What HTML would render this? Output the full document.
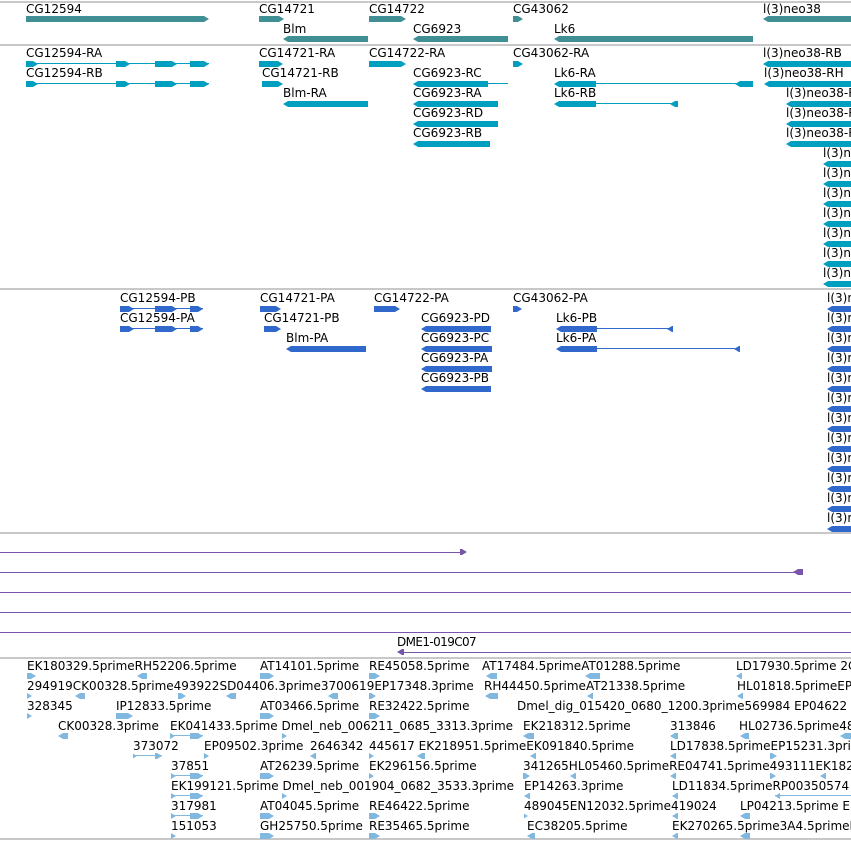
<!DOCTYPE html>
<html><head><meta charset="utf-8">
<style>
html,body{margin:0;padding:0;background:#fff;width:851px;height:841px;overflow:hidden;position:relative}
.t{position:absolute;font:12px "DejaVu Sans","Liberation Sans",sans-serif;line-height:14px;white-space:nowrap;color:#000}
.b{position:absolute;height:6px}
.ln{position:absolute;height:1px}
.sep{position:absolute;left:0;width:851px;height:2px;background:#c8c8c8}
.g{background:#3f8f94}.x{background:#009fc0}.p{background:#3068cc}.e{background:#80b8e0}.v{background:#7755aa}
.r{clip-path:polygon(0 0,calc(100% - 5px) 0,100% 50%,calc(100% - 5px) 100%,0 100%)}
.l{clip-path:polygon(5px 0,100% 0,100% 100%,5px 100%,0 50%)}
</style></head><body>
<div class="sep" style="top:1px"></div>
<div class="sep" style="top:44px"></div>
<div class="sep" style="top:288px"></div>
<div class="sep" style="top:532px"></div>
<div class="sep" style="top:657px"></div>
<div class="sep" style="top:838px"></div>

<!-- genes -->
<div class="t" style="left:26px;top:2px">CG12594</div><div class="b g r" style="left:26px;top:16px;width:183px"></div>
<div class="t" style="left:259px;top:2px">CG14721</div><div class="b g r" style="left:259px;top:16px;width:25px"></div>
<div class="t" style="left:369px;top:2px">CG14722</div><div class="b g r" style="left:369px;top:16px;width:37px"></div>
<div class="t" style="left:513px;top:2px">CG43062</div><div class="b g r" style="left:513px;top:16px;width:10px"></div>
<div class="t" style="left:763px;top:2px">l(3)neo38</div><div class="b g l" style="left:763px;top:16px;width:88px"></div>
<div class="t" style="left:283px;top:22px">Blm</div><div class="b g l" style="left:283px;top:36px;width:85px"></div>
<div class="t" style="left:413px;top:22px">CG6923</div><div class="b g l" style="left:413px;top:36px;width:95px"></div>
<div class="t" style="left:554px;top:22px">Lk6</div><div class="b g l" style="left:554px;top:36px;width:199px"></div>

<!-- transcripts -->
<div class="t" style="left:26px;top:46px">CG12594-RA</div>
<div class="ln x" style="left:26px;top:63px;width:183px"></div>
<div class="b x r" style="left:26px;top:61px;width:12px"></div><div class="b x r" style="left:116px;top:61px;width:14px"></div><div class="b x r" style="left:155px;top:61px;width:22px"></div><div class="b x r" style="left:190px;top:61px;width:19px"></div>
<div class="t" style="left:26px;top:66px">CG12594-RB</div>
<div class="ln x" style="left:26px;top:83px;width:183px"></div>
<div class="b x r" style="left:26px;top:81px;width:12px"></div><div class="b x r" style="left:116px;top:81px;width:14px"></div><div class="b x r" style="left:155px;top:81px;width:22px"></div><div class="b x r" style="left:190px;top:81px;width:19px"></div>
<div class="t" style="left:259px;top:46px">CG14721-RA</div><div class="b x r" style="left:259px;top:61px;width:24px"></div>
<div class="t" style="left:262px;top:66px">CG14721-RB</div><div class="b x r" style="left:262px;top:81px;width:21px"></div>
<div class="t" style="left:283px;top:86px">Blm-RA</div><div class="b x l" style="left:283px;top:101px;width:85px"></div>
<div class="t" style="left:369px;top:46px">CG14722-RA</div><div class="b x r" style="left:369px;top:61px;width:37px"></div>
<div class="t" style="left:513px;top:46px">CG43062-RA</div><div class="b x r" style="left:513px;top:61px;width:10px"></div>
<div class="t" style="left:413px;top:66px">CG6923-RC</div><div class="b x l" style="left:413px;top:81px;width:75px"></div><div class="ln x" style="left:488px;top:83px;width:20px"></div>
<div class="t" style="left:413px;top:86px">CG6923-RA</div><div class="b x l" style="left:413px;top:101px;width:85px"></div>
<div class="t" style="left:413px;top:106px">CG6923-RD</div><div class="b x l" style="left:413px;top:121px;width:85px"></div>
<div class="t" style="left:413px;top:126px">CG6923-RB</div><div class="b x l" style="left:413px;top:141px;width:77px"></div>
<div class="t" style="left:554px;top:66px">Lk6-RA</div><div class="b x l" style="left:554px;top:81px;width:42px"></div><div class="ln x" style="left:596px;top:83px;width:140px"></div><div class="b x l" style="left:735px;top:81px;width:18px"></div>
<div class="t" style="left:554px;top:86px">Lk6-RB</div><div class="b x l" style="left:554px;top:101px;width:42px"></div><div class="ln x" style="left:596px;top:103px;width:76px"></div><div class="b x l" style="left:670px;top:101px;width:8px"></div>
<div class="t" style="left:763px;top:46px">l(3)neo38-RB</div><div class="b x l" style="left:763px;top:61px;width:88px"></div>
<div class="t" style="left:764px;top:66px">l(3)neo38-RH</div><div class="b x l" style="left:764px;top:81px;width:87px"></div>
<div class="t" style="left:786px;top:86px">l(3)neo38-R</div><div class="b x l" style="left:786px;top:101px;width:65px"></div>
<div class="t" style="left:786px;top:106px">l(3)neo38-R</div><div class="b x l" style="left:786px;top:121px;width:65px"></div>
<div class="t" style="left:786px;top:126px">l(3)neo38-R</div><div class="b x l" style="left:786px;top:141px;width:65px"></div>
<div class="t" style="left:823px;top:146px">l(3)neo</div><div class="b x l" style="left:823px;top:161px;width:28px"></div>
<div class="t" style="left:823px;top:166px">l(3)neo</div><div class="b x l" style="left:823px;top:181px;width:28px"></div>
<div class="t" style="left:823px;top:186px">l(3)neo</div><div class="b x l" style="left:823px;top:201px;width:28px"></div>
<div class="t" style="left:823px;top:206px">l(3)neo</div><div class="b x l" style="left:823px;top:221px;width:28px"></div>
<div class="t" style="left:823px;top:226px">l(3)neo</div><div class="b x l" style="left:823px;top:241px;width:28px"></div>
<div class="t" style="left:823px;top:246px">l(3)neo</div><div class="b x l" style="left:823px;top:261px;width:28px"></div>
<div class="t" style="left:823px;top:266px">l(3)neo</div><div class="b x l" style="left:823px;top:281px;width:28px"></div>

<!-- proteins -->
<div class="t" style="left:120px;top:291px">CG12594-PB</div>
<div class="ln p" style="left:120px;top:308px;width:83px"></div>
<div class="b p r" style="left:120px;top:306px;width:14px"></div><div class="b p r" style="left:155px;top:306px;width:22px"></div><div class="b p r" style="left:190px;top:306px;width:13px"></div>
<div class="t" style="left:120px;top:311px">CG12594-PA</div>
<div class="ln p" style="left:120px;top:328px;width:83px"></div>
<div class="b p r" style="left:120px;top:326px;width:14px"></div><div class="b p r" style="left:155px;top:326px;width:22px"></div><div class="b p r" style="left:190px;top:326px;width:13px"></div>
<div class="t" style="left:260px;top:291px">CG14721-PA</div><div class="b p r" style="left:260px;top:306px;width:21px"></div>
<div class="t" style="left:264px;top:311px">CG14721-PB</div><div class="b p r" style="left:264px;top:326px;width:17px"></div>
<div class="t" style="left:286px;top:331px">Blm-PA</div><div class="b p l" style="left:286px;top:346px;width:80px"></div>
<div class="t" style="left:374px;top:291px">CG14722-PA</div><div class="b p r" style="left:374px;top:306px;width:26px"></div>
<div class="t" style="left:513px;top:291px">CG43062-PA</div><div class="b p r" style="left:513px;top:306px;width:9px"></div>
<div class="t" style="left:421px;top:311px">CG6923-PD</div><div class="b p l" style="left:421px;top:326px;width:70px"></div>
<div class="t" style="left:421px;top:331px">CG6923-PC</div><div class="b p l" style="left:421px;top:346px;width:71px"></div>
<div class="t" style="left:421px;top:351px">CG6923-PA</div><div class="b p l" style="left:421px;top:366px;width:71px"></div>
<div class="t" style="left:421px;top:371px">CG6923-PB</div><div class="b p l" style="left:421px;top:386px;width:70px"></div>
<div class="t" style="left:556px;top:311px">Lk6-PB</div><div class="b p l" style="left:556px;top:326px;width:41px"></div><div class="ln p" style="left:597px;top:328px;width:72px"></div><div class="b p l" style="left:667px;top:326px;width:6px"></div>
<div class="t" style="left:556px;top:331px">Lk6-PA</div><div class="b p l" style="left:556px;top:346px;width:41px"></div><div class="ln p" style="left:597px;top:348px;width:138px"></div><div class="b p l" style="left:734px;top:346px;width:6px"></div>
<div class="t" style="left:827px;top:291px">l(3)n</div><div class="b p l" style="left:827px;top:306px;width:24px"></div>
<div class="t" style="left:827px;top:311px">l(3)n</div><div class="b p l" style="left:827px;top:326px;width:24px"></div>
<div class="t" style="left:827px;top:331px">l(3)n</div><div class="b p l" style="left:827px;top:346px;width:24px"></div>
<div class="t" style="left:827px;top:351px">l(3)n</div><div class="b p l" style="left:827px;top:366px;width:24px"></div>
<div class="t" style="left:827px;top:371px">l(3)n</div><div class="b p l" style="left:827px;top:386px;width:24px"></div>
<div class="t" style="left:827px;top:391px">l(3)n</div><div class="b p l" style="left:827px;top:406px;width:24px"></div>
<div class="t" style="left:827px;top:411px">l(3)n</div><div class="b p l" style="left:827px;top:426px;width:24px"></div>
<div class="t" style="left:827px;top:431px">l(3)n</div><div class="b p l" style="left:827px;top:446px;width:24px"></div>
<div class="t" style="left:827px;top:451px">l(3)n</div><div class="b p l" style="left:827px;top:466px;width:24px"></div>
<div class="t" style="left:827px;top:471px">l(3)n</div><div class="b p l" style="left:827px;top:486px;width:24px"></div>
<div class="t" style="left:827px;top:491px">l(3)n</div><div class="b p l" style="left:827px;top:506px;width:24px"></div>
<div class="t" style="left:827px;top:511px">l(3)n</div><div class="b p l" style="left:827px;top:526px;width:24px"></div>

<!-- purple -->
<div class="ln v" style="left:0;top:552px;width:463px"></div><div class="b v r" style="left:460px;top:549px;width:7px"></div>
<div class="ln v" style="left:0;top:572px;width:795px"></div><div class="b v l" style="left:793px;top:569px;width:10px"></div>
<div class="ln v" style="left:0;top:592px;width:851px"></div>
<div class="ln v" style="left:0;top:612px;width:851px"></div>
<div class="ln v" style="left:0;top:632px;width:851px"></div>
<div class="t" style="left:397px;top:635px;letter-spacing:-0.6px">DME1-019C07</div>
<div class="ln v" style="left:400px;top:652px;width:451px"></div><div class="b v l" style="left:397px;top:649px;width:7px"></div>

<!-- ESTs -->
<div class="t" style="left:27px;top:659px">EK180329.5primeRH52206.5prime</div>
<div class="t" style="left:260px;top:659px">AT14101.5prime</div>
<div class="t" style="left:369px;top:659px">RE45058.5prime</div>
<div class="t" style="left:482px;top:659px">AT17484.5primeAT01288.5prime</div>
<div class="t" style="left:736px;top:659px">LD17930.5prime 2C</div>
<div class="b e r" style="left:27px;top:673px;width:9px"></div><div class="b e l" style="left:137px;top:673px;width:10px"></div><div class="b e r" style="left:260px;top:673px;width:14px"></div><div class="b e r" style="left:369px;top:673px;width:11px"></div><div class="b e l" style="left:486px;top:673px;width:11px"></div><div class="b e l" style="left:585px;top:673px;width:15px"></div><div class="b e l" style="left:736px;top:673px;width:6px"></div>

<div class="t" style="left:27px;top:679px">294919CK00328.5prime493922SD04406.3prime3700619EP17348.3prime</div>
<div class="t" style="left:484px;top:679px">RH44450.5primeAT21338.5prime</div>
<div class="t" style="left:737px;top:679px">HL01818.5primeEP</div>
<div class="b e r" style="left:27px;top:693px;width:5px"></div><div class="b e l" style="left:75px;top:693px;width:10px"></div><div class="b e r" style="left:178px;top:693px;width:8px"></div><div class="b e l" style="left:226px;top:693px;width:10px"></div><div class="b e l" style="left:328px;top:693px;width:10px"></div><div class="b e r" style="left:369px;top:693px;width:7px"></div><div class="b e l" style="left:485px;top:693px;width:13px"></div><div class="b e l" style="left:587px;top:693px;width:6px"></div><div class="b e l" style="left:737px;top:693px;width:6px"></div>

<div class="t" style="left:27px;top:699px">328345</div>
<div class="t" style="left:116px;top:699px">IP12833.5prime</div>
<div class="t" style="left:260px;top:699px">AT03466.5prime</div>
<div class="t" style="left:369px;top:699px">RE32422.5prime</div>
<div class="t" style="left:517px;top:699px">Dmel_dig_015420_0680_1200.3prime569984 EP04622</div>
<div class="b e r" style="left:27px;top:713px;width:5px"></div><div class="b e r" style="left:116px;top:713px;width:17px"></div><div class="b e r" style="left:260px;top:713px;width:14px"></div><div class="b e r" style="left:369px;top:713px;width:11px"></div>

<div class="t" style="left:58px;top:719px">CK00328.3prime</div>
<div class="t" style="left:170px;top:719px">EK041433.5prime Dmel_neb_006211_0685_3313.3prime</div>
<div class="t" style="left:523px;top:719px">EK218312.5prime</div>
<div class="t" style="left:670px;top:719px">313846</div>
<div class="t" style="left:739px;top:719px">HL02736.5prime48</div>
<div class="b e l" style="left:58px;top:733px;width:10px"></div><div class="ln e" style="left:170px;top:735px;width:33px"></div><div class="b e r" style="left:170px;top:733px;width:5px"></div><div class="b e r" style="left:190px;top:733px;width:13px"></div><div class="b e r" style="left:282px;top:733px;width:5px"></div><div class="b e l" style="left:523px;top:733px;width:11px"></div><div class="b e l" style="left:670px;top:733px;width:8px"></div><div class="b e l" style="left:740px;top:733px;width:9px"></div><div class="b e l" style="left:840px;top:733px;width:11px"></div>

<div class="t" style="left:133px;top:739px">373072</div>
<div class="t" style="left:204px;top:739px">EP09502.3prime</div>
<div class="t" style="left:310px;top:739px">2646342</div>
<div class="t" style="left:369px;top:739px">445617 EK218951.5primeEK091840.5prime</div>
<div class="t" style="left:670px;top:739px">LD17838.5primeEP15231.3prime</div>
<div class="ln e" style="left:133px;top:755px;width:29px"></div><div class="b e r" style="left:133px;top:753px;width:4px"></div><div class="b e r" style="left:155px;top:753px;width:7px"></div><div class="b e r" style="left:204px;top:753px;width:5px"></div><div class="b e l" style="left:310px;top:753px;width:6px"></div><div class="b e r" style="left:369px;top:753px;width:5px"></div><div class="b e l" style="left:417px;top:753px;width:8px"></div><div class="b e l" style="left:530px;top:753px;width:6px"></div><div class="b e l" style="left:670px;top:753px;width:6px"></div><div class="b e r" style="left:770px;top:753px;width:7px"></div>

<div class="t" style="left:171px;top:759px">37851</div>
<div class="t" style="left:260px;top:759px">AT26239.5prime</div>
<div class="t" style="left:369px;top:759px">EK296156.5prime</div>
<div class="t" style="left:523px;top:759px">341265HL05460.5primeRE04741.5prime493111EK182</div>
<div class="ln e" style="left:171px;top:775px;width:32px"></div><div class="b e r" style="left:171px;top:773px;width:5px"></div><div class="b e r" style="left:190px;top:773px;width:13px"></div><div class="b e r" style="left:260px;top:773px;width:14px"></div><div class="b e r" style="left:369px;top:773px;width:5px"></div><div class="b e r" style="left:523px;top:773px;width:7px"></div><div class="b e l" style="left:570px;top:773px;width:6px"></div><div class="b e l" style="left:670px;top:773px;width:6px"></div><div class="b e r" style="left:770px;top:773px;width:6px"></div><div class="b e l" style="left:820px;top:773px;width:6px"></div>

<div class="t" style="left:171px;top:779px">EK199121.5prime Dmel_neb_001904_0682_3533.3prime</div>
<div class="t" style="left:524px;top:779px">EP14263.3prime</div>
<div class="t" style="left:672px;top:779px">LD11834.5primeRP00350574</div>
<div class="ln e" style="left:171px;top:795px;width:32px"></div><div class="b e r" style="left:171px;top:793px;width:5px"></div><div class="b e r" style="left:190px;top:793px;width:13px"></div><div class="b e r" style="left:282px;top:793px;width:5px"></div><div class="b e l" style="left:524px;top:793px;width:6px"></div><div class="b e l" style="left:672px;top:793px;width:6px"></div><div class="ln e" style="left:775px;top:795px;width:76px"></div><div class="b e l" style="left:775px;top:793px;width:5px"></div>

<div class="t" style="left:171px;top:799px">317981</div>
<div class="t" style="left:260px;top:799px">AT04045.5prime</div>
<div class="t" style="left:369px;top:799px">RE46422.5prime</div>
<div class="t" style="left:524px;top:799px">489045EN12032.5prime419024</div>
<div class="t" style="left:740px;top:799px">LP04213.5prime EK</div>
<div class="ln e" style="left:171px;top:815px;width:32px"></div><div class="b e r" style="left:171px;top:813px;width:5px"></div><div class="b e r" style="left:190px;top:813px;width:13px"></div><div class="b e r" style="left:260px;top:813px;width:14px"></div><div class="b e r" style="left:369px;top:813px;width:11px"></div><div class="b e r" style="left:524px;top:813px;width:4px"></div><div class="b e l" style="left:672px;top:813px;width:6px"></div><div class="b e l" style="left:740px;top:813px;width:10px"></div>

<div class="t" style="left:171px;top:819px">151053</div>
<div class="t" style="left:260px;top:819px">GH25750.5prime</div>
<div class="t" style="left:369px;top:819px">RE35465.5prime</div>
<div class="t" style="left:527px;top:819px">EC38205.5prime</div>
<div class="t" style="left:672px;top:819px">EK270265.5prime3A4.5primeE</div>
<div class="b e r" style="left:171px;top:833px;width:5px"></div><div class="b e r" style="left:260px;top:833px;width:14px"></div><div class="b e r" style="left:369px;top:833px;width:11px"></div><div class="b e l" style="left:527px;top:833px;width:8px"></div><div class="b e l" style="left:672px;top:833px;width:6px"></div><div class="b e l" style="left:740px;top:833px;width:10px"></div>
</body></html>
